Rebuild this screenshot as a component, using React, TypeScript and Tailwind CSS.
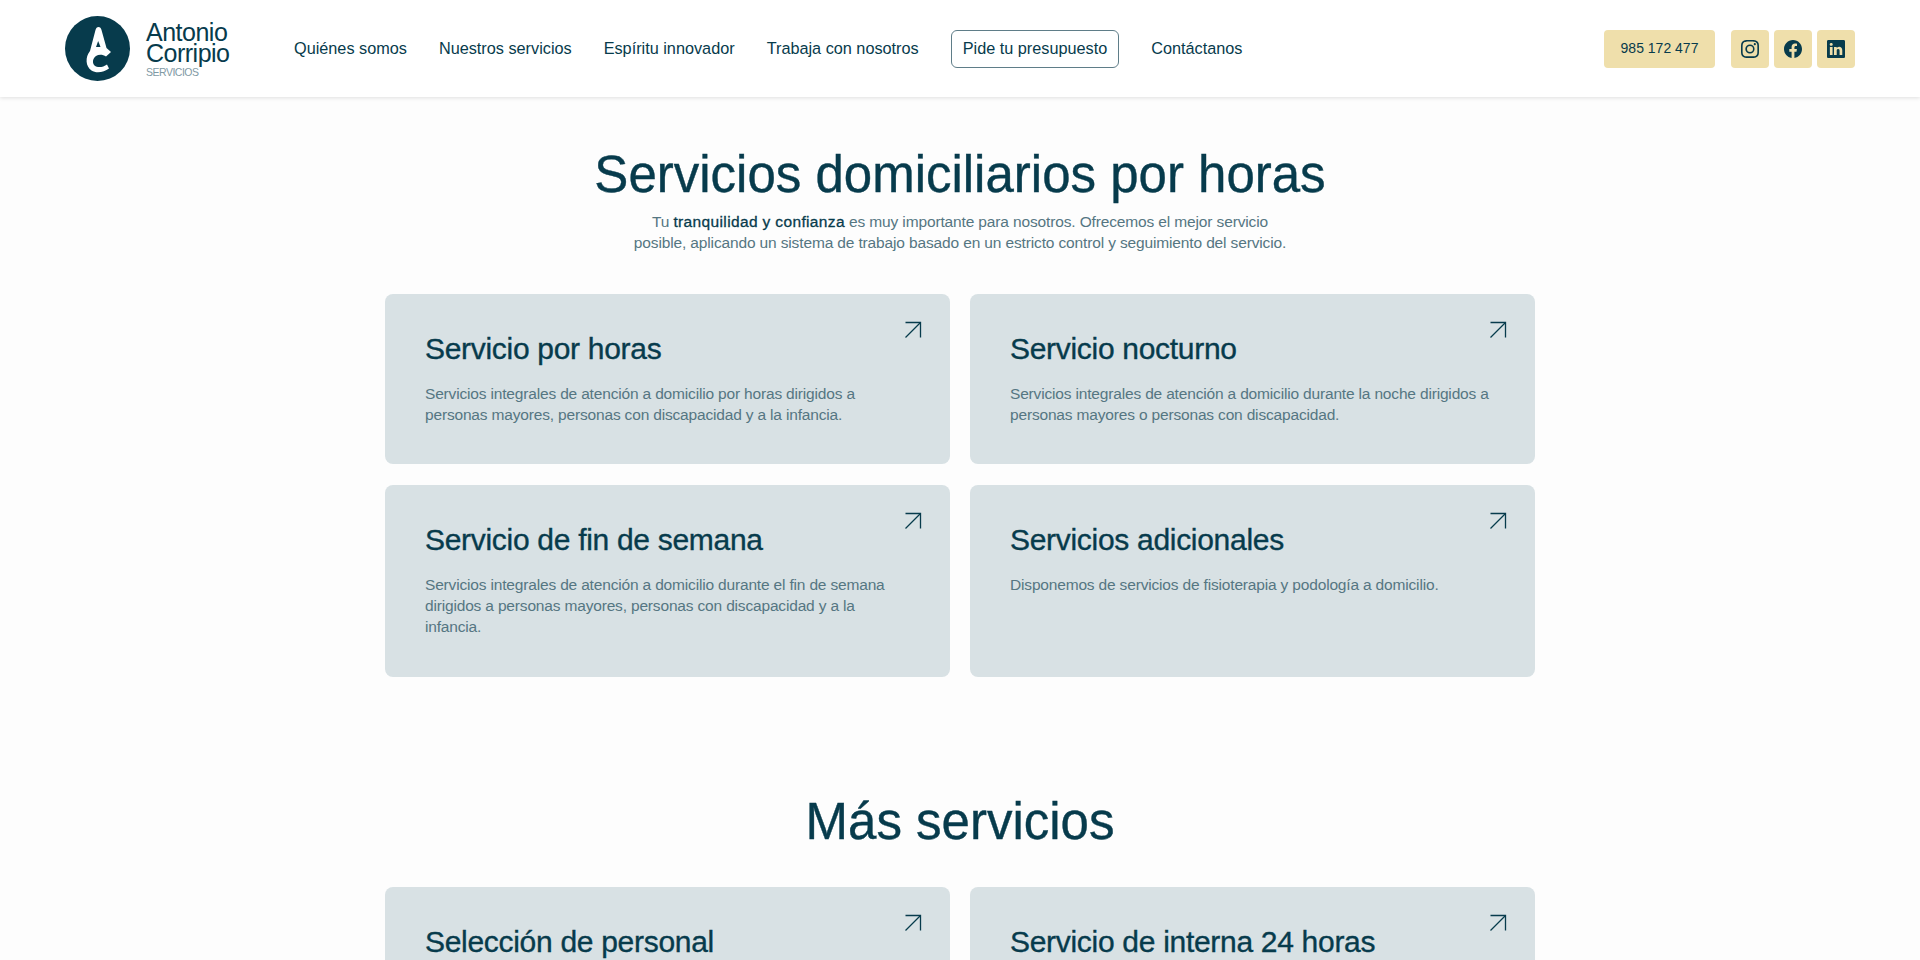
import { BsFacebook, BsInstagram, BsLinkedin } from 'react-icons/bs';

const navItems = ['Quiénes somos', 'Nuestros servicios', 'Espíritu innovador', 'Trabaja con nosotros'];

const mainCards = [
  {
    title: 'Servicio por horas',
    text: 'Servicios integrales de atención a domicilio por horas dirigidos a personas mayores, personas con discapacidad y a la infancia.',
  },
  {
    title: 'Servicio nocturno',
    text: 'Servicios integrales de atención a domicilio durante la noche dirigidos a personas mayores o personas con discapacidad.',
  },
  {
    title: 'Servicio de fin de semana',
    text: 'Servicios integrales de atención a domicilio durante el fin de semana dirigidos a personas mayores, personas con discapacidad y a la infancia.',
  },
  {
    title: 'Servicios adicionales',
    text: 'Disponemos de servicios de fisioterapia y podología a domicilio.',
  },
];

const moreCards = [
  { title: 'Selección de personal', text: '' },
  { title: 'Servicio de interna 24 horas', text: '' },
];

function Logo() {
  return (
    <svg viewBox="0 0 65 65" className="h-[65px] w-[65px] shrink-0">
      <circle cx="32.5" cy="32.5" r="32.5" fill="#073b4c" />
      <path
        d="M33.5 11 C35 11 36 12 36.5 14 L41.5 32 L46 36 L41 40.5 C38 38.5 34 38 31 40 C27.5 42.5 27 47 29.5 49.5 C32.5 52 38 51.5 42 48.5 L44 52.5 C39 56.5 31 57.5 26.5 54.5 C20.5 50.5 20 41 25 35 L30.5 14 C31 12 32 11 33.5 11 Z"
        fill="#fff"
      />
      <path d="M33.2 25 L35.5 31 L31 31 Z" fill="#073b4c" />
    </svg>
  );
}

function Arrow() {
  return (
    <svg viewBox="0 0 18 18" className="absolute right-[28px] top-[27px] h-[18px] w-[18px]" fill="none" stroke="#073b4c" strokeWidth="1.3">
      <path d="M1.5 16.5 L16.5 1.5" />
      <path d="M1.5 1.5 H16.5 V16.5" />
    </svg>
  );
}

function Card({ title, text, className }: { title: string; text: string; className: string }) {
  return (
    <a className={`relative block rounded-lg bg-[#d8e1e4] pt-[36px] pr-[44px] pl-10 ${className}`}>
      <Arrow />
      <h3 className="text-[30px] leading-[38px] tracking-[-0.3px] text-[#073b4c] [-webkit-text-stroke:0.35px_#073b4c]">{title}</h3>
      <p className="mt-[15px] text-[15.5px] leading-[21px] tracking-[-0.17px] text-[#557682]">{text}</p>
    </a>
  );
}

export default function App() {
  return (
    <div className="h-[960px] overflow-hidden bg-[#fdfdfd] font-['Liberation_Sans',Arial,sans-serif] text-[#073b4c]">
      <header className="flex h-[97px] items-center justify-between bg-white pr-[65px] pl-[65px] shadow-[0_1px_4px_rgba(0,0,0,0.12)]">
        <div className="flex items-center">
          <div className="flex w-[229px] items-center gap-4">
            <Logo />
            <div className="pt-[3px]">
              <div className="text-[25px] leading-[21px] tracking-[-0.5px]">
                <div>Antonio</div>
                <div>Corripio</div>
              </div>
              <div className="mt-[2px] text-[10.5px] leading-3 tracking-[-0.5px] text-[#7f9aa4]">SERVICIOS</div>
            </div>
          </div>
          <nav className="flex items-center gap-8 text-[16.25px]">
            {navItems.map((item) => (
              <a key={item}>{item}</a>
            ))}
            <a className="flex h-[38px] items-center rounded-md border border-[#5f7d88] px-[11px]">Pide tu presupuesto</a>
            <a>Contáctanos</a>
          </nav>
        </div>
        <div className="flex items-center gap-4">
          <a className="flex h-[38px] w-[111px] items-center justify-center rounded bg-[#efdfab] text-[14px]">985 172 477</a>
          <div className="flex gap-[5px]">
            <a className="flex h-[38px] w-[38px] items-center justify-center rounded bg-[#efdfab]">
              <BsInstagram size={18} />
            </a>
            <a className="flex h-[38px] w-[38px] items-center justify-center rounded bg-[#efdfab]">
              <BsFacebook size={18} />
            </a>
            <a className="flex h-[38px] w-[38px] items-center justify-center rounded bg-[#efdfab]">
              <BsLinkedin size={18} />
            </a>
          </div>
        </div>
      </header>

      <main className="mx-auto w-[1150px]">
        <h1 className="pt-[50px] text-center text-[51px] leading-[56px] [-webkit-text-stroke:0.4px_#073b4c]">Servicios domiciliarios por horas</h1>
        <p className="mx-auto mt-[7.5px] w-[700px] text-center text-[15.5px] leading-[21px] tracking-[-0.14px] text-[#557682]">
          Tu <strong className="font-normal tracking-[0.36px] text-[#073b4c] [-webkit-text-stroke:0.3px_#073b4c]">tranquilidad y confianza</strong> es muy importante para nosotros. Ofrecemos el mejor servicio
          <br />
          posible, aplicando un sistema de trabajo basado en un estricto control y seguimiento del servicio.
        </p>
        <div className="mt-[41.5px] grid grid-cols-2 gap-x-5 gap-y-[21px]">
          {mainCards.map((c, i) => (
            <Card key={c.title} {...c} className={i < 2 ? 'h-[170px]' : 'h-[192px]'} />
          ))}
        </div>
        <h2 className="mt-[117px] text-center text-[51px] leading-[56px] [-webkit-text-stroke:0.4px_#073b4c]">Más servicios</h2>
        <div className="mt-[37px] grid grid-cols-2 gap-5">
          {moreCards.map((c) => (
            <Card key={c.title} {...c} className="h-[170px]" />
          ))}
        </div>
      </main>
    </div>
  );
}
